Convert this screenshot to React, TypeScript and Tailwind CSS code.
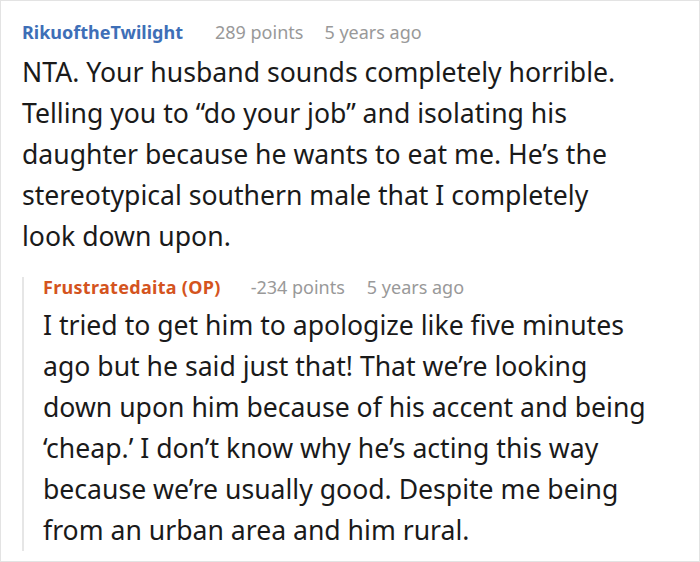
export default function App() {
  return (
    <div className="w-[700px] h-[562px] bg-white border border-[#e3e3e3] overflow-hidden font-['Noto_Sans',sans-serif] text-[#1a1a1a]">
      <div className="pl-[21px] pr-[36px] pt-[16px]">
        <div className="flex items-baseline text-[18px] leading-[30px]">
          <span className="font-bold text-[#3e6fb7]">RikuoftheTwilight</span>
          <span className="ml-[32px] text-[#999999]">289 points</span>
          <span className="ml-[21px] text-[#999999]">5 years ago</span>
        </div>
        <p className="text-[26.6px] leading-[41px] mt-[5px]">
          NTA. Your husband sounds completely horrible. Telling you to “do your job” and isolating his daughter because he wants to eat me. He’s the stereotypical southern male that I completely
          <br />
          look down upon.
        </p>

        <div className="mt-[20px] border-l-[2px] border-[#e6e6e6] pl-[19px]">
          <div className="flex items-baseline text-[18px] leading-[20px]">
            <span className="font-bold text-[#d4541e] tracking-[0.3px]">Frustratedaita (OP)</span>
            <span className="ml-[30px] text-[#999999]">-234 points</span>
            <span className="ml-[22px] text-[#999999]">5 years ago</span>
          </div>
          <p className="text-[26.6px] leading-[41px] mt-[8px] mb-[-7px]">
            I tried to get him to apologize like five minutes ago but he said just that! That we’re looking down upon him because of his accent and being ‘cheap.’ I don’t know why he’s acting this way because we’re usually good. Despite me being from an urban area and him rural.
          </p>
        </div>
      </div>
    </div>
  );
}
